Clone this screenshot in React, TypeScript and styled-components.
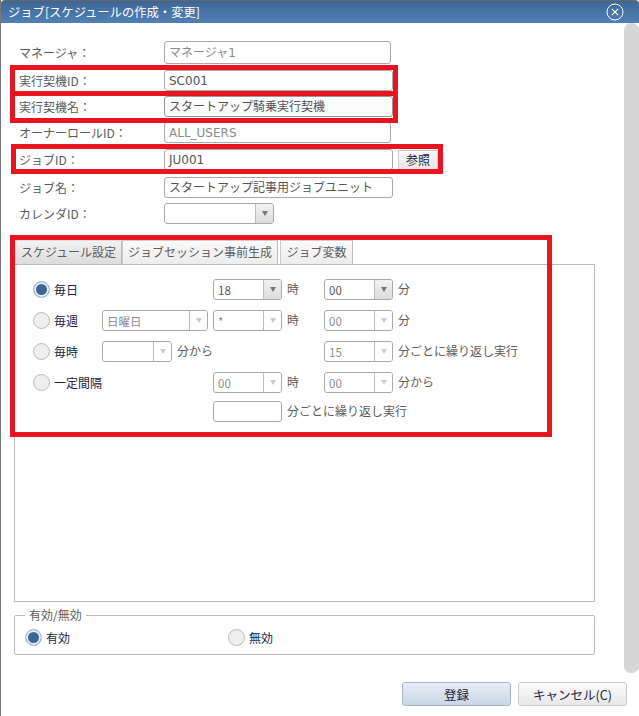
import { ReactElement } from "react";
import styled, { createGlobalStyle } from "styled-components";

const GlobalStyle = createGlobalStyle`
  html, body {
    margin: 0;
    padding: 0;
    background: #fff;
  }
  body {
    font-family: "DejaVu Sans", "Noto Sans CJK JP", sans-serif;
    font-size: 12px;
    color: #555;
  }
`;

const Window = styled.div`
  position: relative;
  width: 639px;
  height: 716px;
  box-sizing: border-box;
  border-left: 1px solid #777;
  overflow: hidden;
`;

const TitleBar = styled.div`
  height: 23px;
  box-sizing: border-box;
  display: flex;
  align-items: center;
  justify-content: space-between;
  padding: 0 15px 0 7px;
  border-top: 1px solid #666;
  border-radius: 4px 4px 0 0;
  background: linear-gradient(#3d6696, #5280b4);
  color: #fff;
  font-family: "Noto Sans CJK JP", sans-serif;
  font-size: 12.3px;
`;

const Content = styled.div`
  height: 651px;
  display: flex;
  justify-content: space-between;
`;

const Main = styled.div`
  width: 582px;
  padding: 18px 0 0 13px;
`;

const ScrollThumb = styled.div`
  width: 15px;
  height: 650px;
  border-radius: 7px;
  background: #d6d6d6;
`;

const FormRow = styled.div<{ $gap: number; $h?: number }>`
  display: flex;
  align-items: center;
  height: ${(p) => p.$h ?? 21}px;
  margin-top: ${(p) => p.$gap}px;
  padding-left: 5px;
`;

const FieldLabel = styled.label`
  width: 145px;
  flex: none;
  color: #5c5c5c;
  font-family: "Noto Sans CJK JP", sans-serif;
`;

const TextInput = styled.div<{ $w: number; $disabled?: boolean; $h?: number; $shaded?: boolean }>`
  width: ${(p) => p.$w}px;
  height: ${(p) => p.$h ?? 21}px;
  box-sizing: border-box;
  flex: none;
  padding-left: 4px;
  line-height: ${(p) => p.$h ?? 21}px;
  border: 1px solid ${(p) => (p.$shaded ? "#999" : "#aaa")};
  border-radius: 3px;
  background: ${(p) => (p.$shaded ? "#fbfbfb" : "#fff")};
  color: ${(p) => (p.$disabled ? "#8c8c8c" : "#555")};
  white-space: nowrap;
  overflow: hidden;
`;

const RefButton = styled.button`
  width: 40px;
  height: 20px;
  margin-left: 5px;
  padding: 0;
  border: 1px solid #ccc;
  background: linear-gradient(#f8f8f8, #e6e6e6);
  color: #223;
  font: 12px "Noto Sans CJK JP", sans-serif;
`;

const ComboBox = styled.div<{ $w?: number; $disabled?: boolean }>`
  width: ${(p) => p.$w ?? 69}px;
  height: 21px;
  box-sizing: border-box;
  flex: none;
  display: flex;
  border: 1px solid #aaa;
  border-radius: 3px;
  background: #fff;
  color: ${(p) => (p.$disabled ? "#8c8c8c" : "#555")};
`;

const ComboText = styled.span`
  flex: 1;
  padding-left: 4px;
  line-height: 20px;
  font-size: 11.5px;
  white-space: nowrap;
  overflow: hidden;
`;

const ComboArrow = styled.span<{ $disabled?: boolean }>`
  width: 17px;
  flex: none;
  display: flex;
  align-items: center;
  justify-content: center;
  border-left: 1px solid #bbb;
  border-radius: 0 2px 2px 0;
  background: ${(p) => (p.$disabled ? "#fff" : "linear-gradient(#f2f2f2, #dcdcdc)")};
  &::after {
    content: "";
    border-left: 3.5px solid transparent;
    border-right: 3.5px solid transparent;
    border-top: 5px solid ${(p) => (p.$disabled ? "#ccc" : "#777")};
  }
`;

const TabBar = styled.div`
  display: flex;
  height: 24px;
  margin-top: 16px;
  padding-left: 1px;
`;

const Tab = styled.div<{ $w: number; $active?: boolean }>`
  width: ${(p) => p.$w}px;
  box-sizing: border-box;
  margin-right: ${(p) => (p.$active ? 0 : 2)}px;
  border: 1px solid #bbb;
  border-bottom: 0;
  border-left-color: ${(p) => (p.$active ? "transparent" : "#ccc")};
  border-top-color: ${(p) => (p.$active ? "transparent" : "#ccc")};
  background: ${(p) =>
    p.$active ? "linear-gradient(#f2f2f2, #dcdcdc)" : "linear-gradient(#fafafa, #ececec)"};
  color: #5c5c5c;
  font-family: "Noto Sans CJK JP", sans-serif;
  line-height: 22px;
  text-align: center;
  white-space: nowrap;
`;

const TabPanel = styled.div`
  width: 581px;
  height: 338px;
  box-sizing: border-box;
  padding: 14px 0 0 18px;
  border: 1px solid #bbb;
`;

const ScheduleGrid = styled.div`
  display: grid;
  grid-template-columns: 69px 111px 111px 1fr;
  grid-template-rows: repeat(3, 31px) 29px 21px;
`;

const Cell = styled.div`
  display: flex;
  align-items: flex-start;
  gap: 5px;
  color: #5c5c5c;
  white-space: nowrap;
  font-family: "Noto Sans CJK JP", sans-serif;
  line-height: 20px;
`;

const RadioOption = styled.label`
  display: flex;
  align-items: center;
  gap: 4px;
  height: 21px;
  color: #224;
  font-family: "Noto Sans CJK JP", sans-serif;
  white-space: nowrap;
`;

const RadioMark = styled.span<{ $checked?: boolean }>`
  width: 17px;
  height: 17px;
  box-sizing: border-box;
  flex: none;
  border: 1px solid ${(p) => (p.$checked ? "#b8c8dc" : "#bbb")};
  border-radius: 50%;
  background: ${(p) => (p.$checked ? "#3d6697" : "#eee")};
  box-shadow: ${(p) => (p.$checked ? "inset 0 0 0 2px #e8eef6" : "none")};
`;

const EnableBox = styled.fieldset`
  width: 581px;
  height: 47px;
  box-sizing: border-box;
  display: flex;
  margin: 6px 0 0;
  padding: 0 0 0 10px;
  border: 1px solid #bbb;
  border-radius: 2px;
`;

const EnableLegend = styled.legend`
  margin-left: 0;
  padding: 0 4px;
  line-height: 14px;
  color: #5c5c5c;
  font-family: "Noto Sans CJK JP", sans-serif;
`;

const EnableOption = styled.div`
  width: 203px;
  margin-top: 5px;
`;

const Footer = styled.div`
  display: flex;
  justify-content: flex-end;
  gap: 7px;
  padding: 8px 12px 0 0;
`;

const FooterButton = styled.button<{ $primary?: boolean }>`
  width: 109px;
  height: 24px;
  padding: 0;
  border: 1px solid ${(p) => (p.$primary ? "#a9b6c4" : "#ccc")};
  border-radius: 3px;
  background: ${(p) =>
    p.$primary ? "linear-gradient(#e6eef8, #c9d6e4)" : "linear-gradient(#fafafa, #e8e8e8)"};
  color: #224;
  font: 12.5px "Noto Sans CJK JP", sans-serif;
`;

/* annotation frames drawn on top of the screenshot */
const Callout = styled.div<{ $x: number; $y: number; $w: number; $h: number }>`
  position: absolute;
  left: ${(p) => p.$x - 1}px;
  top: ${(p) => p.$y}px;
  width: ${(p) => p.$w}px;
  height: ${(p) => p.$h}px;
  box-sizing: border-box;
  border: 5px solid #e8141f;
  pointer-events: none;
`;

function Combo({ value, w, disabled }: { value?: string; w?: number; disabled?: boolean }): ReactElement {
  return (
    <ComboBox $w={w} $disabled={disabled}>
      <ComboText>{value}</ComboText>
      <ComboArrow $disabled={disabled} />
    </ComboBox>
  );
}

function Radio({ label, checked }: { label: string; checked?: boolean }): ReactElement {
  return (
    <RadioOption>
      <RadioMark $checked={checked} />
      {label}
    </RadioOption>
  );
}

export default function App(): ReactElement {
  return (
    <Window>
      <GlobalStyle />
      <TitleBar>
        <span>ジョブ[スケジュールの作成・変更]</span>
        <svg width="18" height="18" viewBox="0 0 18 18" fill="none" stroke="#fff">
          <circle cx="9" cy="9" r="8" strokeWidth="1" />
          <path d="M5.8 5.8l6.4 6.4M12.2 5.8l-6.4 6.4" strokeWidth="1.2" />
        </svg>
      </TitleBar>
      <Content>
        <Main>
          <FormRow $gap={0} $h={23}>
            <FieldLabel>マネージャ：</FieldLabel>
            <TextInput $w={227} $h={23} $disabled>マネージャ1</TextInput>
          </FormRow>
          <FormRow $gap={6}>
            <FieldLabel>実行契機ID：</FieldLabel>
            <TextInput $w={229}>SC001</TextInput>
          </FormRow>
          <FormRow $gap={5}>
            <FieldLabel>実行契機名：</FieldLabel>
            <TextInput $w={229} $shaded>スタートアップ騎乗実行契機</TextInput>
          </FormRow>
          <FormRow $gap={5}>
            <FieldLabel>オーナーロールID：</FieldLabel>
            <TextInput $w={227} $disabled>ALL_USERS</TextInput>
          </FormRow>
          <FormRow $gap={6}>
            <FieldLabel>ジョブID：</FieldLabel>
            <TextInput $w={229}>JU001</TextInput>
            <RefButton>参照</RefButton>
          </FormRow>
          <FormRow $gap={7}>
            <FieldLabel>ジョブ名：</FieldLabel>
            <TextInput $w={229}>スタートアップ記事用ジョブユニット</TextInput>
          </FormRow>
          <FormRow $gap={5}>
            <FieldLabel>カレンダID：</FieldLabel>
            <Combo w={110} />
          </FormRow>

          <TabBar>
            <Tab $w={107} $active>スケジュール設定</Tab>
            <Tab $w={156}>ジョブセッション事前生成</Tab>
            <Tab $w={73}>ジョブ変数</Tab>
          </TabBar>
          <TabPanel>
            <ScheduleGrid>
              <Radio label="毎日" checked />
              <Cell />
              <Cell><Combo value="18" />時</Cell>
              <Cell><Combo value="00" />分</Cell>

              <Radio label="毎週" />
              <Cell><Combo value="日曜日" w={106} disabled /></Cell>
              <Cell><Combo value="*" disabled />時</Cell>
              <Cell><Combo value="00" disabled />分</Cell>

              <Radio label="毎時" />
              <Cell><Combo w={70} disabled />分から</Cell>
              <Cell />
              <Cell><Combo value="15" disabled />分ごとに繰り返し実行</Cell>

              <Radio label="一定間隔" />
              <Cell />
              <Cell><Combo value="00" disabled />時</Cell>
              <Cell><Combo value="00" disabled />分から</Cell>

              <Cell />
              <Cell />
              <Cell>
                <TextInput $w={69} />
                分ごとに繰り返し実行
              </Cell>
            </ScheduleGrid>
          </TabPanel>
          <EnableBox>
            <EnableLegend>有効/無効</EnableLegend>
            <EnableOption><Radio label="有効" checked /></EnableOption>
            <EnableOption><Radio label="無効" /></EnableOption>
          </EnableBox>
        </Main>
        <ScrollThumb />
      </Content>
      <Footer>
        <FooterButton $primary>登録</FooterButton>
        <FooterButton>キャンセル(C)</FooterButton>
      </Footer>

      <Callout $x={10} $y={65} $w={388} $h={31} />
      <Callout $x={10} $y={91} $w={388} $h={32} />
      <Callout $x={11} $y={144} $w={432} $h={30} />
      <Callout $x={10} $y={235} $w={542} $h={202} />
    </Window>
  );
}
